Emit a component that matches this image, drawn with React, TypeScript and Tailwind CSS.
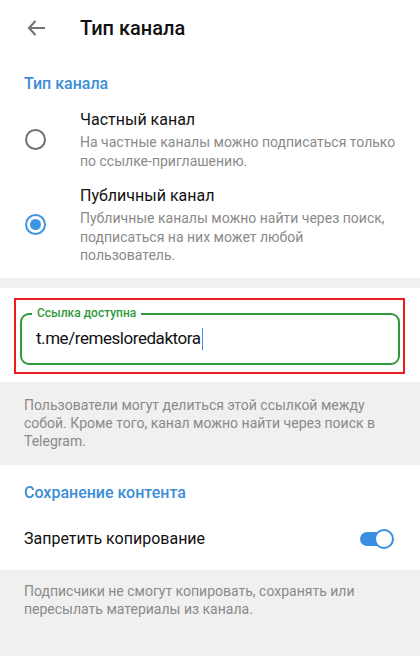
import React from "react";

export default function App() {
  return (
    <div className="w-[420px] h-[656px] bg-[#f0f0f0] overflow-hidden" style={{ fontFamily: "Roboto, 'Noto Sans', sans-serif" }}>
      {/* header */}
      <div className="h-14 bg-white flex items-center">
        <div className="w-[80px] flex items-center pl-[27px]">
          <svg width="18" height="16" viewBox="0 0 18 16" fill="none" stroke="#737373" strokeWidth="2" strokeLinecap="square">
            <path d="M2 8 H17" />
            <path d="M8 1.5 L2 8 L8 14.5" strokeLinecap="round" strokeLinejoin="round" />
          </svg>
        </div>
        <div className="text-[20px] font-medium text-[#111] leading-none">Тип канала</div>
      </div>

      {/* channel type */}
      <div className="bg-white pt-[18px] pb-[13px]">
        <div className="px-6 text-[16px] leading-[20px] font-medium text-[#3d8ed8]">Тип канала</div>
        <div className="flex items-center mt-[15px]">
          <div className="w-[80px] flex justify-center pr-[10px]">
            <div className="w-[21px] h-[21px] rounded-full border-2 border-[#707070]" />
          </div>
          <div className="flex-1 pr-5">
            <div className="text-[16px] leading-[22px] text-[#111]">Частный канал</div>
            <div className="text-[14px] leading-[18.5px] text-[#8a8a8a] mt-[2px]">На частные каналы можно подписаться только по ссылке-приглашению.</div>
          </div>
        </div>
        <div className="flex items-center mt-[15px]">
          <div className="w-[80px] flex justify-center pr-[10px]">
            <div className="w-[21px] h-[21px] rounded-full border-2 border-[#3a95e4] flex items-center justify-center">
              <div className="w-[11px] h-[11px] rounded-full bg-[#3a95e4]" />
            </div>
          </div>
          <div className="flex-1 pr-5">
            <div className="text-[16px] leading-[22px] text-[#111]">Публичный канал</div>
            <div className="text-[14px] leading-[18.5px] text-[#8a8a8a] mt-[2px] max-w-[310px]">Публичные каналы можно найти через поиск, подписаться на них может любой пользователь.</div>
          </div>
        </div>
      </div>

      <div className="h-[10px]" />

      {/* link */}
      <div className="bg-white pt-[10px] pb-[8px]">
        <div className="ml-[14px] mr-[15px] border-2 border-[#ee1c1c] pt-[13px] pl-[4px] pr-[3px] pb-[7px]">
          <div className="relative h-[52px] rounded-[9px] border-2 border-[#2f9a3c] flex items-center pl-[14px]">
            <div className="absolute left-[10px] top-[-9px] bg-white px-[5px] text-[12px] leading-[14px] font-medium text-[#2f9a3c]">Ссылка доступна</div>
            <span className="text-[17px] tracking-[-0.45px] text-[#111] leading-none">t.me/remesloredaktora</span>
            <span className="w-[1.5px] h-[22px] bg-[#3a8fe0] ml-[1px]" />
          </div>
        </div>
      </div>

      <div className="pt-[14px] pb-[15px] px-6 text-[14px] leading-[18px] text-[#8a8a8a] pr-[40px]">
        Пользователи могут делиться этой ссылкой между собой. Кроме того, канал можно найти через поиск в Telegram.
      </div>

      {/* content saving */}
      <div className="bg-white pt-[18px] pb-[7px]">
        <div className="px-6 text-[16px] leading-[20px] font-medium text-[#3d8ed8]">Сохранение контента</div>
        <div className="h-12 mt-[12px] flex items-center justify-between pl-6 pr-[26px]">
          <div className="text-[16px] text-[#111]">Запретить копирование</div>
          <div className="relative w-[34px] h-[20px] flex items-center">
            <div className="w-[32px] h-[14px] rounded-full bg-[#3a8fe2]" />
            <div className="absolute right-0 top-0 w-[20px] h-[20px] rounded-full bg-white border-2 border-[#3a8fe2]" />
          </div>
        </div>
      </div>

      <div className="pt-[12px] px-6 text-[14px] leading-[18.5px] text-[#8a8a8a] pr-[40px]">
        Подписчики не смогут копировать, сохранять или пересылать материалы из канала.
      </div>
    </div>
  );
}
